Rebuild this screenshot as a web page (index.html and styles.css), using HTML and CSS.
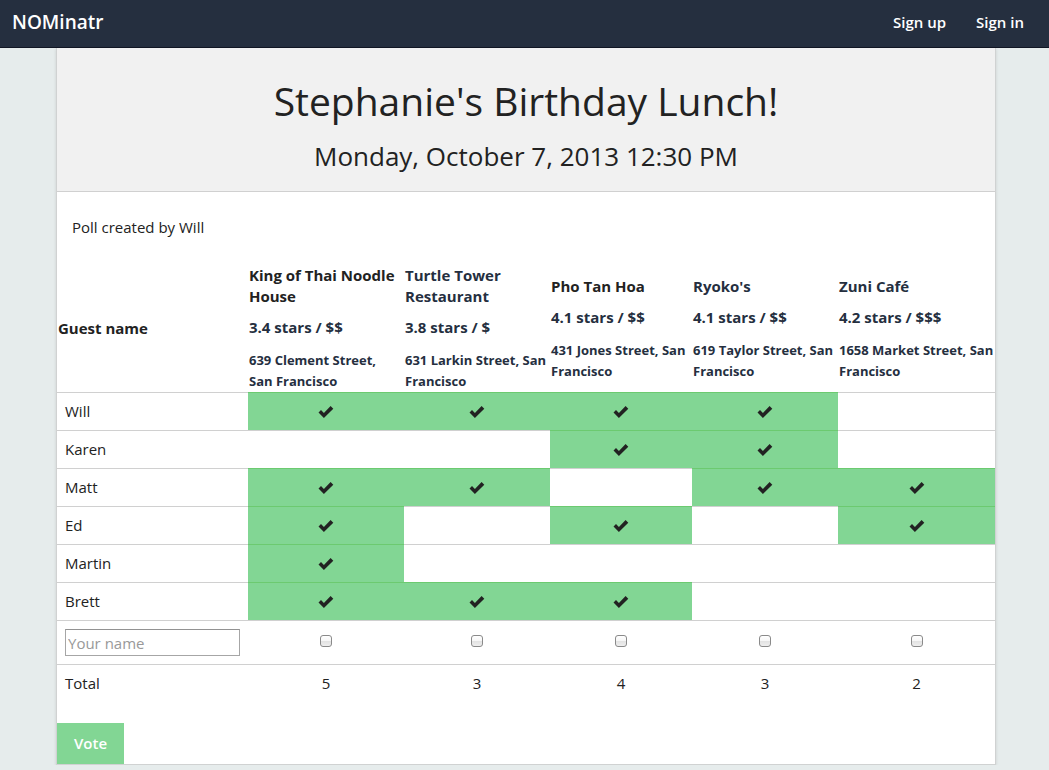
FILE: index.html
```html
<!DOCTYPE html>
<html lang="en">
<head>
<meta charset="utf-8">
<meta name="viewport" content="width=device-width, initial-scale=1">
<title>NOMinatr</title>
<link rel="stylesheet" href="styles.css">
</head>
<body>
<svg class="sprite" aria-hidden="true">
  <symbol id="check" viewBox="0 0 16 14">
    <path d="M.5 7.6 3 5.1l2.9 2.8L12.6 1.1l2.7 2.6L5.9 13z"/>
  </symbol>
</svg>
<nav class="navbar">
  <a class="brand" href="#">NOMinatr</a>
  <div class="nav-links">
    <a href="#">Sign up</a>
    <a href="#">Sign in</a>
  </div>
</nav>
<div class="page">
  <main class="card">
    <header class="poll-header">
      <h1>Stephanie's Birthday Lunch!</h1>
      <h2>Monday, October 7, 2013 12:30 PM</h2>
    </header>
    <p class="author">Poll created by Will</p>
    <form>
      <table class="poll">
        <colgroup>
          <col class="col-guest"><col class="col-king"><col class="col-turtle"><col class="col-pho"><col class="col-ryoko"><col class="col-zuni">
        </colgroup>
        <thead>
          <tr>
            <th scope="col">Guest name</th>
            <th scope="col" class="venue"><div class="name dark">King of Thai Noodle House</div><div class="rating">3.4 stars / $$</div><div class="address">639 Clement Street, San&nbsp;Francisco</div></th>
            <th scope="col" class="venue"><div class="name">Turtle Tower Restaurant</div><div class="rating">3.8 stars / $</div><div class="address">631 Larkin Street, San Francisco</div></th>
            <th scope="col" class="venue"><div class="name dark">Pho Tan Hoa</div><div class="rating">4.1 stars / $$</div><div class="address">431 Jones Street, San Francisco</div></th>
            <th scope="col" class="venue"><div class="name">Ryoko's</div><div class="rating">4.1 stars / $$</div><div class="address">619 Taylor Street, San Francisco</div></th>
            <th scope="col" class="venue"><div class="name">Zuni Café</div><div class="rating">4.2 stars / $$$</div><div class="address">1658 Market Street, San Francisco</div></th>
          </tr>
        </thead>
        <tbody>
          <tr><td>Will</td><td class="yes"><svg><use href="#check"/></svg></td><td class="yes"><svg><use href="#check"/></svg></td><td class="yes"><svg><use href="#check"/></svg></td><td class="yes"><svg><use href="#check"/></svg></td><td></td></tr>
          <tr><td>Karen</td><td></td><td></td><td class="yes"><svg><use href="#check"/></svg></td><td class="yes"><svg><use href="#check"/></svg></td><td></td></tr>
          <tr><td>Matt</td><td class="yes"><svg><use href="#check"/></svg></td><td class="yes"><svg><use href="#check"/></svg></td><td></td><td class="yes"><svg><use href="#check"/></svg></td><td class="yes"><svg><use href="#check"/></svg></td></tr>
          <tr><td>Ed</td><td class="yes"><svg><use href="#check"/></svg></td><td></td><td class="yes"><svg><use href="#check"/></svg></td><td></td><td class="yes"><svg><use href="#check"/></svg></td></tr>
          <tr><td>Martin</td><td class="yes"><svg><use href="#check"/></svg></td><td></td><td></td><td></td><td></td></tr>
          <tr><td>Brett</td><td class="yes"><svg><use href="#check"/></svg></td><td class="yes"><svg><use href="#check"/></svg></td><td class="yes"><svg><use href="#check"/></svg></td><td></td><td></td></tr>
          <tr class="entry">
            <td><input class="guest" type="text" placeholder="Your name" aria-label="Your name"></td>
            <td><input type="checkbox" aria-label="King of Thai Noodle House"></td>
            <td><input type="checkbox" aria-label="Turtle Tower Restaurant"></td>
            <td><input type="checkbox" aria-label="Pho Tan Hoa"></td>
            <td><input type="checkbox" aria-label="Ryoko's"></td>
            <td><input type="checkbox" aria-label="Zuni Café"></td>
          </tr>
          <tr><td>Total</td><td>5</td><td>3</td><td>4</td><td>3</td><td>2</td></tr>
        </tbody>
      </table>
      <button class="vote" type="submit">Vote</button>
    </form>
  </main>
</div>
</body>
</html>
```

FILE: styles.css
```css
* { box-sizing: border-box; }

body {
  margin: 0;
  background: #e6ecec;
  color: #222;
  font: 15px/21px "Open Sans", sans-serif;
}

.sprite { display: none; }

.navbar {
  display: flex;
  align-items: center;
  justify-content: space-between;
  height: 48px;
  padding: 0 25px 3px 12px;
  background: #252f3f;
  border-bottom: 1px solid #111624;
}

.navbar a {
  color: #fff;
  text-decoration: none;
  font-weight: 600;
}

.navbar .brand { font-size: 19px; }

.nav-links {
  display: flex;
  gap: 30px;
}

.page { padding-left: 3px; }

.card {
  max-width: 940px;
  margin: 0 auto;
  background: #fff;
  border: 1px solid #d0d2d2;
  border-top: 0;
  box-shadow: 0 1px 3px rgba(0, 0, 0, .12);
}

.poll-header {
  padding: 25px 15px 16px;
  background: #f1f1f1;
  border-bottom: 1px solid #d0d0d0;
  text-align: center;
}

h1, h2 {
  margin: 0;
  font-weight: 400;
}

h1 {
  font-size: 39px;
  line-height: 56px;
}

h2 {
  margin-top: 8px;
  font-size: 26px;
  line-height: 38px;
}

.author {
  margin: 0;
  padding: 25px 15px;
}

.poll {
  width: 100%;
  table-layout: fixed;
  border-collapse: separate;
  border-spacing: 0;
}

.col-guest { width: 191px; }
.col-king { width: 156px; }
.col-turtle, .col-ryoko { width: 146px; }
.col-pho { width: 142px; }
.col-zuni { width: 157px; }

th {
  padding: 2px 0 0 1px;
  text-align: left;
  vertical-align: middle;
  font-weight: 700;
}

.venue { color: #252f3f; }
.dark { color: #222; }
.rating { margin: 10px 0 12px; }
.address { font-size: 13px; }

td {
  height: 38px;
  padding: 8px;
  border-top: 1px solid #d0d0d0;
  text-align: center;
}

td:first-child { text-align: left; }

.yes {
  background: #82d694;
  border-top-color: #6cca70;
}

.yes svg {
  display: block;
  width: 16px;
  height: 14px;
  margin: 0 auto;
  fill: #222;
}

.guest {
  display: block;
  width: 100%;
  height: 27px;
  padding: 0 2px;
  border: 1px solid #a6a6a6;
  border-top-color: #929292;
  background: #fff;
  color: #222;
  font: inherit;
}

.guest::placeholder { color: #999; }

input[type="checkbox"] {
  appearance: none;
  display: block;
  width: 12px;
  height: 12px;
  margin: 0 auto 3px;
  border: 1px solid #8a8a8a;
  border-radius: 3px;
  background: linear-gradient(#fff, #f6f6f6 50%, #e2e2e2 50%, #eee);
}

input[type="checkbox"]:checked { background: #252f3f; }

.vote {
  display: block;
  height: 41px;
  margin-top: 21px;
  padding: 0 17px;
  border: 0;
  background: #82d694;
  color: #fff;
  font: inherit;
  font-weight: 600;
}
```
